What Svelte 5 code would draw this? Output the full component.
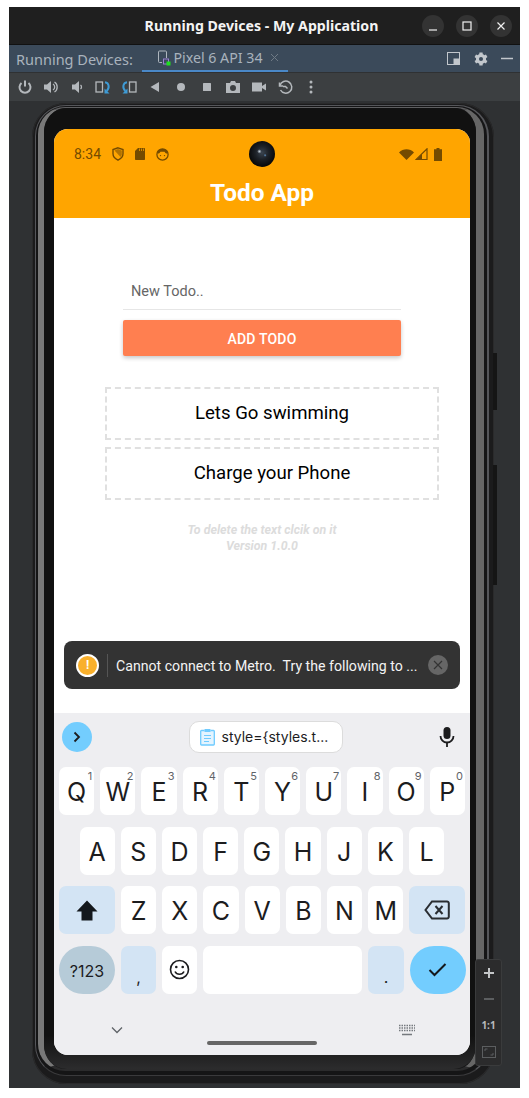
<script>
	const rowOne = [
		['Q', '1'], ['W', '2'], ['E', '3'], ['R', '4'], ['T', '5'],
		['Y', '6'], ['U', '7'], ['I', '8'], ['O', '9'], ['P', '0']
	];
	const rowTwo = ['A', 'S', 'D', 'F', 'G', 'H', 'J', 'K', 'L'];
	const rowThree = ['Z', 'X', 'C', 'V', 'B', 'N', 'M'];
	const todos = ['Lets Go swimming', 'Charge your Phone'];
</script>

<div class="window">
	<header class="titlebar">
		<span class="title">Running Devices - My Application</span>
		<div class="win-buttons">
			<span class="win-btn"><svg width="12" height="12" viewBox="0 0 12 12"><path d="M2 10h8" stroke="#f0f0f0" stroke-width="1.2" /></svg></span>
			<span class="win-btn"><svg width="12" height="12" viewBox="0 0 12 12"><rect x="2" y="2" width="8" height="8" fill="none" stroke="#f0f0f0" stroke-width="1.2" /></svg></span>
			<span class="win-btn"><svg width="12" height="12" viewBox="0 0 12 12"><path d="M2.500 2.500l7 7M9.500 2.500l-7 7" stroke="#f0f0f0" stroke-width="1.2" /></svg></span>
		</div>
	</header>

	<div class="tabbar">
		<span class="tab-label">Running Devices:</span>
		<div class="tab">
			<svg width="14" height="16" viewBox="0 0 14 16">
				<path d="M5 12.500H2.500a1 1 0 0 1-1-1V2a1 1 0 0 1 1-1h6a1 1 0 0 1 1 1v6" fill="none" stroke="#aeb6be" stroke-width="1" />
				<rect x="6.500" y="9" width="5" height="5" fill="none" stroke="#9a7fd0" stroke-width="1" />
				<rect x="9.500" y="11.500" width="4" height="4" fill="#1ee01e" />
			</svg>
			<span>Pixel 6 API 34</span>
			<svg class="tab-close" width="9" height="9" viewBox="0 0 9 9"><path d="M1 1l7 7M8 1l-7 7" stroke="#6f7a85" stroke-width="1" /></svg>
		</div>
		<div class="tab-tools">
			<svg width="13" height="13" viewBox="0 0 13 13"><rect x="0.500" y="0.500" width="12" height="12" fill="none" stroke="#c2c7cc" /><rect x="6.500" y="6.500" width="6" height="6" fill="#c2c7cc" /></svg>
			<svg width="14" height="14" viewBox="0 0 24 24"><path fill="#c2c7cc" fill-rule="evenodd" d="M20.500 13.500a8.500 8.500 0 0 0 0-3l2.500-1.800-2.500-4.400-2.800 1.200a8.500 8.500 0 0 0-2.600-1.500L14.700 1H9.300l-.4 3a8.500 8.500 0 0 0-2.600 1.500L3.500 4.300 1 8.700l2.500 1.800a8.500 8.500 0 0 0 0 3L1 15.300l2.500 4.400 2.800-1.200a8.500 8.500 0 0 0 2.600 1.500l.4 3h5.400l.4-3a8.500 8.500 0 0 0 2.600-1.500l2.800 1.200 2.500-4.400zM12 15.500a3.500 3.500 0 1 1 0-7 3.500 3.500 0 0 1 0 7z" /></svg>
			<svg width="12" height="13" viewBox="0 0 12 13"><path d="M0 6.500h12" stroke="#c2c7cc" stroke-width="1.500" /></svg>
		</div>
	</div>

	<div class="toolbar">
		<svg viewBox="0 0 16 16"><path d="M8 1.500v6" stroke="#b4b8bc" stroke-width="2" /><path d="M4.500 4a5.500 5.500 0 1 0 7 0" fill="none" stroke="#b4b8bc" stroke-width="2" /></svg>
		<svg viewBox="0 0 16 16"><path d="M1 5.500h3l4-3.500v12l-4-3.500H1z" fill="#b4b8bc" /><path d="M10 5a3.500 3.500 0 0 1 0 6M11.500 3a6 6 0 0 1 0 10" fill="none" stroke="#b4b8bc" stroke-width="1.300" /></svg>
		<svg viewBox="0 0 16 16"><path d="M3 5.500h3l4-3.500v12l-4-3.500H3z" fill="#b4b8bc" /><path d="M11.500 6a2.500 2.500 0 0 1 0 4" fill="none" stroke="#b4b8bc" stroke-width="1.300" /></svg>
		<svg viewBox="0 0 16 16"><rect x="1" y="3" width="6.500" height="10" fill="none" stroke="#b4b8bc" stroke-width="1.300" /><path d="M10 3.200c4.200 .6 4.800 5.800 1.700 8.800" fill="none" stroke="#3e9bd6" stroke-width="2" /><path d="M9.500 9.500v5h5z" fill="#3e9bd6" /></svg>
		<svg viewBox="0 0 16 16"><rect x="8.500" y="3" width="6.500" height="10" fill="none" stroke="#b4b8bc" stroke-width="1.300" /><path d="M6 3.200c-4.200 .6-4.800 5.800-1.700 8.800" fill="none" stroke="#3e9bd6" stroke-width="2" /><path d="M6.500 9.500v5h-5z" fill="#3e9bd6" /></svg>
		<svg viewBox="0 0 16 16"><path d="M12 3v10L3.500 8z" fill="#b4b8bc" /></svg>
		<svg viewBox="0 0 16 16"><circle cx="8" cy="8" r="4" fill="#b4b8bc" /></svg>
		<svg viewBox="0 0 16 16"><rect x="4" y="4" width="8" height="8" rx="0.500" fill="#b4b8bc" /></svg>
		<svg viewBox="0 0 16 16"><path fill-rule="evenodd" d="M1 4h4l1-2h4l1 2h4v10H1zM8 6a3 3 0 1 0 0 6 3 3 0 0 0 0-6z" fill="#b4b8bc" /></svg>
		<svg viewBox="0 0 16 16"><path d="M1 3.500h10v9H1zM11 7l4-2.500v7L11 9z" fill="#b4b8bc" /></svg>
		<svg viewBox="0 0 16 16"><path d="M2.500 3.500v3.500h3.500" fill="none" stroke="#b4b8bc" stroke-width="1.500" /><path d="M3 6.500a6 6 0 1 1 .5 4.500" fill="none" stroke="#b4b8bc" stroke-width="1.500" /><path d="M6 7.500h2.500l2 2" fill="none" stroke="#b4b8bc" stroke-width="1.500" /></svg>
		<svg viewBox="0 0 16 16"><circle cx="8" cy="3" r="1.500" fill="#b4b8bc" /><circle cx="8" cy="8" r="1.500" fill="#b4b8bc" /><circle cx="8" cy="13" r="1.500" fill="#b4b8bc" /></svg>
	</div>

	<div class="stage">
		<div class="phone">
			<i class="side-btn side-power"></i>
			<i class="side-btn side-volume"></i>
			<div class="band">
				<div class="rim">
					<div class="bezel">
						<div class="screen">
							<div class="appbar">
								<div class="statusbar">
									<span class="clock">8:34</span>
									<svg width="12" height="14" viewBox="0 0 12 14"><path d="M6 .8l5 1.800v4.200c0 2.900-2.100 5-5 6.400-2.900-1.400-5-3.500-5-6.400V2.600z" fill="none" stroke="#744b00" stroke-width="1.400" /><path d="M2.500 3.500l6 6.500 1.300-2V3.500L6 2z" fill="#744b00" opacity=".55" /></svg>
									<svg width="10" height="12" viewBox="0 0 10 12"><path d="M3 0H9.300a.7.7 0 0 1 .7.700V11.300a.7.7 0 0 1-.7.700H.7a.7.7 0 0 1-.7-.700V3z" fill="#744b00" /><path d="M4.500 .5v2.500M6.500 .5v2.500M8.500 .5v2.500" stroke="#ffa500" stroke-width="0.700" /></svg>
									<svg width="13" height="13" viewBox="0 0 13 13"><circle cx="6.500" cy="6.500" r="5.600" fill="none" stroke="#744b00" stroke-width="1.300" /><path d="M1.500 5.500c2 0 2.500-1 3-1.800h4c.5 .8 1 1.800 3 1.800V3L8.500 1h-4L1.500 3z" fill="#744b00" /><circle cx="4.500" cy="7.600" r=".7" fill="#744b00" /><circle cx="8.500" cy="7.600" r=".7" fill="#744b00" /></svg>
									<span class="status-right">
										<svg width="15" height="11" viewBox="0 0 15 11"><path d="M0 3.500C4 -0.800 11 -0.800 15 3.500L7.500 11z" fill="#744b00" /></svg>
										<svg width="13" height="12" viewBox="0 0 13 12"><path d="M12 .8V11.500H1z" fill="none" stroke="#744b00" stroke-width="1.200" /><path d="M7 6v5.500H1.500z" fill="#744b00" /></svg>
										<svg class="battery" width="8" height="13" viewBox="0 0 8 13"><path d="M2.500 0h3v1.200H8V13H0V1.200h2.500z" fill="#744b00" /></svg>
									</span>
									<span class="camera"></span>
								</div>
								<h1>Todo App</h1>
							</div>

							<main class="content">
								<input class="todo-input" placeholder="New Todo.." />
								<button class="add-btn">ADD TODO</button>
								<ul class="todo-list">
									{#each todos as todo}
										<li>{todo}</li>
									{/each}
								</ul>
								<p class="hint">To delete the text clcik on it<br />Version 1.0.0</p>

								<div class="toast">
									<span class="toast-icon">!</span>
									<span class="toast-rule"></span>
									<span class="toast-text">Cannot connect to Metro.&nbsp; Try the following to ...</span>
									<span class="toast-close">
										<svg width="10" height="10" viewBox="0 0 10 10"><path d="M1 1l8 8M9 1l-8 8" stroke="#333" stroke-width="1.200" /></svg>
									</span>
								</div>
							</main>

							<section class="keyboard">
								<div class="suggest">
									<span class="suggest-arrow">
										<svg width="10" height="12" viewBox="0 0 10 12"><path d="M2.500 1.500L7 6l-4.500 4.500" fill="none" stroke="#1c1c1e" stroke-width="1.800" /></svg>
									</span>
									<span class="chip">
										<svg width="15" height="18" viewBox="0 0 15 18"><path d="M4.500 2.500H1.500a.8.8 0 0 0-.8.800V16.200a.8.8 0 0 0 .8.800h12a.8.8 0 0 0 .8-.800V3.300a.8.800 0 0 0-.8-.800h-3" fill="#e4f4ff" stroke="#6fcbff" stroke-width="1.300" /><rect x="4.500" y="1" width="6" height="3" rx=".6" fill="#6fcbff" /><path d="M4 7.500h7M4 10.500h7M4 13.500h5" stroke="#6fcbff" stroke-width="1.200" /></svg>
										<span>style=&#123;styles.t...</span>
									</span>
									<svg class="mic" width="16" height="22" viewBox="0 0 16 22"><rect x="4.500" y="1" width="7" height="12" rx="3.500" fill="#1c1c1e" /><path d="M1.500 10a6.500 6.500 0 0 0 13 0" fill="none" stroke="#1c1c1e" stroke-width="1.800" /><path d="M8 16.500V21" stroke="#1c1c1e" stroke-width="1.800" /></svg>
								</div>

								<div class="rows">
									<div class="row">
										{#each rowOne as [letter, digit]}
											<span class="key">{letter}<sup>{digit}</sup></span>
										{/each}
									</div>
									<div class="row row-home">
										{#each rowTwo as letter}
											<span class="key">{letter}</span>
										{/each}
									</div>
									<div class="row">
										<span class="key wide tint">
											<svg width="22" height="21" viewBox="0 0 22 21"><path d="M11 .5L21.500 11.500H16.500V20.500H5.500V11.500H.5z" fill="#14181c" /></svg>
										</span>
										{#each rowThree as letter}
											<span class="key">{letter}</span>
										{/each}
										<span class="key wide tint">
											<svg width="26" height="20" viewBox="0 0 26 20"><path d="M8 1.500H23a1.800 1.800 0 0 1 1.800 1.800V16.700A1.800 1.800 0 0 1 23 18.500H8L1.500 10z" fill="none" stroke="#2a2d31" stroke-width="2" /><path d="M11.500 6l7 8M18.500 6l-7 8" stroke="#2a2d31" stroke-width="2" /></svg>
										</span>
									</div>
									<div class="row">
										<span class="key wide symbols">?123</span>
										<span class="key tint punct">,</span>
										<span class="key">
											<svg width="21" height="21" viewBox="0 0 21 21"><circle cx="10.500" cy="10.500" r="9" fill="none" stroke="#1c1c1e" stroke-width="1.600" /><circle cx="7.300" cy="8" r="1.300" fill="#1c1c1e" /><circle cx="13.700" cy="8" r="1.300" fill="#1c1c1e" /><path d="M6 12.500a5 5 0 0 0 9 0" fill="none" stroke="#1c1c1e" stroke-width="1.600" /></svg>
										</span>
										<span class="key space"></span>
										<span class="key tint punct">.</span>
										<span class="key wide done">
											<svg width="19" height="15" viewBox="0 0 19 15"><path d="M1.500 8l5 5L17.500 2" fill="none" stroke="#14181c" stroke-width="2" /></svg>
										</span>
									</div>
								</div>

								<div class="navhints">
									<svg width="12" height="8" viewBox="0 0 12 8"><path d="M1 1.500l5 5 5-5" fill="none" stroke="#5f6368" stroke-width="1.300" /></svg>
									<svg width="18" height="12" viewBox="0 0 18 12"><path d="M1 1.500h16M1 4h16M1 6.500h16" stroke="#75797e" stroke-width="1.500" stroke-dasharray="1.500 1" /><path d="M4 10.500h10" stroke="#75797e" stroke-width="1.300" /></svg>
								</div>
								<div class="homebar"></div>
							</section>
						</div>
					</div>
				</div>
			</div>
		</div>

		<div class="zoom-tools">
			<svg width="12" height="12" viewBox="0 0 12 12"><path d="M6 1v10M1 6h10" stroke="#c4c6c8" stroke-width="2" /></svg>
			<svg width="12" height="12" viewBox="0 0 12 12"><path d="M1 6h10" stroke="#5c5e60" stroke-width="2" /></svg>
			<span>1:1</span>
			<svg width="14" height="12" viewBox="0 0 14 12"><rect x=".5" y=".5" width="13" height="11" fill="none" stroke="#5c5e60" /><path d="M3 5V3h2.500M11 7v2H8.500" fill="none" stroke="#5c5e60" /></svg>
		</div>
	</div>
</div>

<style>
	:global(body) {
		background: #fff;
	}

	.window {
		position: relative;
		width: 511px;
		height: 1081px;
		margin: 7px 0 0 9px;
		display: flex;
		flex-direction: column;
		background: #2f3133;
		overflow: hidden;
		font-family: 'Noto Sans', sans-serif;
	}

	.titlebar {
		position: relative;
		flex: none;
		height: 38px;
		box-sizing: border-box;
		border-bottom: 1px solid #111;
		background: #1f1f1f;
		display: flex;
		align-items: center;
		justify-content: center;
	}

	.title {
		margin-right: 6px;
		color: #f4f4f4;
		font-size: 14.150px;
		font-weight: 700;
	}

	.win-buttons {
		position: absolute;
		top: 8px;
		right: 8px;
		display: flex;
		gap: 12px;
	}

	.win-btn {
		width: 22px;
		height: 22px;
		border-radius: 50%;
		background: #333;
		display: flex;
		align-items: center;
		justify-content: center;
	}

	.tabbar {
		flex: none;
		height: 27px;
		display: flex;
		align-items: center;
		background: #3b4a5a;
		color: #a9b3bd;
		font-size: 14.200px;
		position: relative;
	}

	.tab-label {
		margin-left: 7px;
		width: 125.500px;
		font-size: 14.500px;
		white-space: nowrap;
	}

	.tab {
		position: relative;
		width: 146px;
		height: 100%;
		box-sizing: border-box;
		padding-left: 15px;
		display: flex;
		align-items: center;
		gap: 3px;
		border-bottom: 2px solid #4a88c7;
	}

	.tab-close {
		margin-left: 4px;
	}

	.tab-tools {
		margin-left: auto;
		margin-right: 7px;
		display: flex;
		align-items: center;
		gap: 13.500px;
	}

	.toolbar {
		flex: none;
		height: 29px;
		box-sizing: border-box;
		padding-left: 8px;
		display: flex;
		align-items: center;
		gap: 10px;
		background: #3c3f41;
		border-top: 1px solid #2f3133;
	}

	.toolbar svg {
		width: 16px;
		height: 16px;
	}

	.stage {
		flex: 1;
		padding: 2px 0 0 23px;
	}

	.phone {
		position: relative;
		width: 462px;
		height: 981px;
		box-sizing: border-box;
		padding: 2px 5px 8px 3px;
		border-radius: 34px;
		background: #1b1b1c;
		box-shadow: inset 0 0 0 1px #2a2a2b;
	}

	.side-btn {
		position: absolute;
		right: -3px;
		width: 4px;
		background: #151515;
	}

	.side-power {
		top: 250px;
		height: 57px;
	}

	.side-volume {
		top: 362px;
		height: 120px;
	}

	.band {
		height: 100%;
		box-sizing: border-box;
		padding: 1px 3px 4px 2px;
		border: 1px solid #55565a;
		border-right-width: 2px;
		border-bottom-color: #3a3a3c;
		border-radius: 31px;
		background: #151516;
	}

	.rim {
		height: 100%;
		box-sizing: border-box;
		border-style: solid;
		border-color: #5e5e60 #666 #2b2b2c #787878;
		border-width: 1px 8px 2px 6px;
		border-radius: 27px;
	}

	.bezel {
		height: 100%;
		box-sizing: border-box;
		padding: 21px 6px 14px 10px;
		border-radius: 23px;
		background: linear-gradient(#111 0, #111 96.500%, #2c2c2d 100%);
	}

	.screen {
		height: 926px;
		display: flex;
		flex-direction: column;
		border-radius: 14px;
		overflow: hidden;
		background: #fff;
		font-family: Roboto, sans-serif;
	}

	.appbar {
		flex: none;
		height: 89px;
		background: #ffa500;
	}

	.statusbar {
		position: relative;
		height: 50px;
		padding: 0 28px 0 20px;
		display: flex;
		align-items: center;
		gap: 11px;
	}

	.clock {
		color: #744b00;
		font-size: 14px;
	}

	.status-right {
		margin-left: auto;
		display: flex;
		align-items: center;
		gap: 1px;
	}

	.battery {
		margin-left: 5px;
	}

	.camera {
		position: absolute;
		left: 195px;
		top: 12px;
		width: 26px;
		height: 26px;
		border-radius: 50%;
		background:
			radial-gradient(circle at 40% 40%, #c8d4e0 0, rgba(200, 212, 224, 0) 10%),
			radial-gradient(circle at 62% 55%, #5f8fc0 0, rgba(95, 143, 192, 0) 7%),
			radial-gradient(circle at 50% 45%, #3a4450 0, #1c2026 35%, #08090b 70%, #000 100%);
	}

	h1 {
		margin: 0;
		text-align: center;
		color: #fff;
		font-size: 24.400px;
		line-height: 27px;
		font-weight: 700;
	}

	.content {
		position: relative;
		flex: 1;
	}

	.todo-input {
		display: block;
		box-sizing: border-box;
		width: 278px;
		height: 36px;
		margin: 56px 0 0 69px;
		padding: 0 8px;
		border: 0;
		border-bottom: 1px solid #e6e6e6;
		outline: none;
		background: none;
		font-family: inherit;
		font-size: 14.500px;
	}

	.todo-input::placeholder {
		color: #666;
		opacity: 1;
	}

	.add-btn {
		display: block;
		width: 278px;
		height: 36px;
		margin: 10px 0 0 69px;
		padding: 2px 0 0;
		border: 0;
		border-radius: 2px;
		background: #ff7f50;
		box-shadow: 0 2px 4px rgba(0, 0, 0, 0.22);
		color: #fff;
		font-family: inherit;
		font-size: 14px;
		font-weight: 500;
		letter-spacing: 0.2px;
	}

	.todo-list {
		list-style: none;
		width: 334px;
		margin: 31px 0 0 51px;
		padding: 0;
		display: flex;
		flex-direction: column;
		gap: 7px;
	}

	.todo-list li {
		box-sizing: border-box;
		height: 53px;
		padding-bottom: 2px;
		display: flex;
		align-items: center;
		justify-content: center;
		border: 2px dashed #e0e0e0;
		color: #000;
		font-size: 18.600px;
	}

	.hint {
		margin: 22px 0 0;
		text-align: center;
		color: #dcdcdc;
		font-size: 12.400px;
		line-height: 16px;
		font-style: italic;
		font-weight: 700;
	}

	.toast {
		position: absolute;
		left: 10px;
		right: 10px;
		bottom: 24px;
		height: 48px;
		box-sizing: border-box;
		padding: 0 12px;
		display: flex;
		align-items: center;
		border-radius: 8px;
		background: #333;
	}

	.toast-icon {
		flex: none;
		width: 19px;
		height: 19px;
		display: flex;
		align-items: center;
		justify-content: center;
		border: 2px solid #fff;
		border-radius: 50%;
		background: #f9b02c;
		color: #fff;
		font-size: 12px;
		font-weight: 700;
	}

	.toast-rule {
		flex: none;
		width: 1px;
		height: 23px;
		margin: 0 8px;
		background: #555;
	}

	.toast-text {
		flex: 1;
		padding-top: 2px;
		color: #f4f4f4;
		font-size: 14.150px;
		white-space: nowrap;
	}

	.toast-close {
		flex: none;
		width: 20px;
		height: 20px;
		display: flex;
		align-items: center;
		justify-content: center;
		border-radius: 50%;
		background: #666;
	}

	.keyboard {
		position: relative;
		flex: none;
		height: 342px;
		background: #eeeef1;
		font-family: Inter, sans-serif;
	}

	.suggest {
		height: 47px;
		box-sizing: border-box;
		padding: 0 15px 0 8px;
		display: flex;
		align-items: center;
		justify-content: space-between;
	}

	.suggest-arrow {
		width: 30px;
		height: 30px;
		display: flex;
		align-items: center;
		justify-content: center;
		border-radius: 50%;
		background: #73cdfe;
	}

	.chip {
		width: 154px;
		height: 32px;
		box-sizing: border-box;
		padding-left: 10px;
		display: flex;
		align-items: center;
		gap: 7px;
		border: 1px solid #dcdcdc;
		border-radius: 10px;
		background: #fff;
		color: #1c1c1e;
		font-size: 14px;
		white-space: nowrap;
	}

	.rows {
		padding: 7px 5px 0;
		display: flex;
		flex-direction: column;
		gap: 11.500px;
	}

	.row {
		height: 48px;
		display: flex;
		gap: 6px;
	}

	.row-home {
		padding-left: 20.500px;
	}

	.key {
		position: relative;
		flex: none;
		box-sizing: border-box;
		width: 35.200px;
		height: 48px;
		padding-top: 2px;
		display: flex;
		align-items: center;
		justify-content: center;
		border-radius: 7px;
		background: #fff;
		color: #1c1c1e;
		font-size: 25px;
		line-height: 18px;
	}

	.key sup {
		position: absolute;
		top: 3px;
		right: 2px;
		color: #5f6368;
		font-size: 11px;
		line-height: 13px;
	}

	.key svg {
		margin-top: -2px;
	}

	.wide {
		width: 56px;
	}

	.tint {
		background: #d3e4f4;
	}

	.symbols {
		border-radius: 24px;
		background: #b6cbd8;
		font-size: 16px;
	}

	.done {
		border-radius: 24px;
		background: #73cdfe;
	}

	.space {
		width: 159px;
	}

	.punct {
		align-items: flex-end;
		padding: 0 0 9px;
		font-size: 16px;
		line-height: 16px;
	}

	.navhints {
		margin-top: 30px;
		padding: 0 54px 0 57px;
		display: flex;
		align-items: center;
		justify-content: space-between;
	}

	.homebar {
		position: absolute;
		left: 153px;
		bottom: 10px;
		width: 110px;
		height: 4px;
		border-radius: 2px;
		background: #666;
	}

	.zoom-tools {
		position: absolute;
		left: 466px;
		top: 952px;
		width: 27px;
		height: 107px;
		box-sizing: border-box;
		padding: 7px 0;
		display: flex;
		flex-direction: column;
		align-items: center;
		justify-content: space-between;
		border: 1px solid #3a3b3c;
		border-radius: 3px;
		background: #2b2b2c;
		color: #b8babc;
		font-size: 10px;
		font-weight: 700;
	}
</style>
